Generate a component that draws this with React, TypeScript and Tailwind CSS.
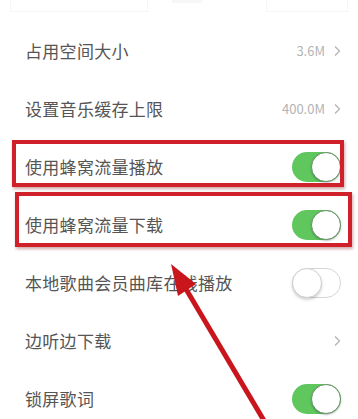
import React from "react";

const font = { fontFamily: '"Noto Sans CJK SC", "Noto Sans", sans-serif' };

function Toggle({ on }: { on: boolean }) {
  return on ? (
    <div className="relative w-[49px] h-[30px] rounded-full bg-[#5fc75d] shrink-0">
      <div className="absolute right-0 top-0 w-[30px] h-[30px] rounded-full bg-white border border-[#6b8f6b] shadow-[0_1px_2px_rgba(0,0,0,0.25)]" />
    </div>
  ) : (
    <div className="relative w-[49px] h-[30px] rounded-full bg-white border border-[#d6d6d6] shrink-0">
      <div className="absolute left-[-1px] top-[-1px] w-[30px] h-[30px] rounded-full bg-white border border-[#cfcfcf] shadow-[0_2px_3px_rgba(0,0,0,0.18)]" />
    </div>
  );
}

function Chevron() {
  return (
    <svg width="8" height="12" viewBox="0 0 8 12" className="shrink-0">
      <path d="M2 1.5 L6.5 6 L2 10.5" fill="none" stroke="#b5b5b5" strokeWidth="1.3" />
    </svg>
  );
}

function Row({ label, right }: { label: string; right: React.ReactNode }) {
  return (
    <div className="h-[58px] flex items-center justify-between pl-[25px] pr-[17px]">
      <span className="text-[17px] text-[#555555] tracking-[0.3px]">{label}</span>
      <div className="flex items-center gap-[8px]">{right}</div>
    </div>
  );
}

export default function App() {
  return (
    <div className="relative w-[358px] h-[419px] bg-white overflow-hidden" style={font}>
      <div className="h-[22px] flex items-start px-[10px] gap-[6px]">
        <div className="w-[138px] h-[12px] border border-t-0 border-[#f5f5f5]" />
        <div className="w-[30px] h-[3px] bg-[#f7f7f7] ml-[18px]" />
        <div className="flex-1" />
        <div className="w-[82px] h-[12px] border border-t-0 border-[#f5f5f5]" />
      </div>
      <Row label="占用空间大小" right={<><span className="text-[13px] text-[#b3b3b3]">3.6M</span><Chevron /></>} />
      <Row label="设置音乐缓存上限" right={<><span className="text-[13px] text-[#b3b3b3]">400.0M</span><Chevron /></>} />
      <Row label="使用蜂窝流量播放" right={<Toggle on />} />
      <Row label="使用蜂窝流量下载" right={<Toggle on />} />
      <Row label="本地歌曲会员曲库在线播放" right={<Toggle on={false} />} />
      <Row label="边听边下载" right={<Chevron />} />
      <Row label="锁屏歌词" right={<Toggle on />} />

      {/* annotation boxes */}
      <div className="absolute left-[12px] top-[140px] w-[332px] h-[47px] border-[4px] border-[#d0212a] shadow-[1px_2px_3px_rgba(120,0,0,0.35)]" />
      <div className="absolute left-[15px] top-[192px] w-[337px] h-[55px] border-[4px] border-[#d0212a] shadow-[1px_2px_3px_rgba(120,0,0,0.35)]" />

      {/* arrow */}
      <svg className="absolute left-0 top-0" width="358" height="419" viewBox="0 0 358 419">
        <defs>
          <filter id="b" x="-10%" y="-10%" width="120%" height="120%">
            <feGaussianBlur stdDeviation="0.7" />
          </filter>
        </defs>
        <g filter="url(#b)">
          <line x1="266" y1="424" x2="183" y2="284" stroke="#c8161e" strokeWidth="5" />
          <polygon points="171,264 196,284 178,296" fill="#c8161e" />
        </g>
      </svg>
    </div>
  );
}
